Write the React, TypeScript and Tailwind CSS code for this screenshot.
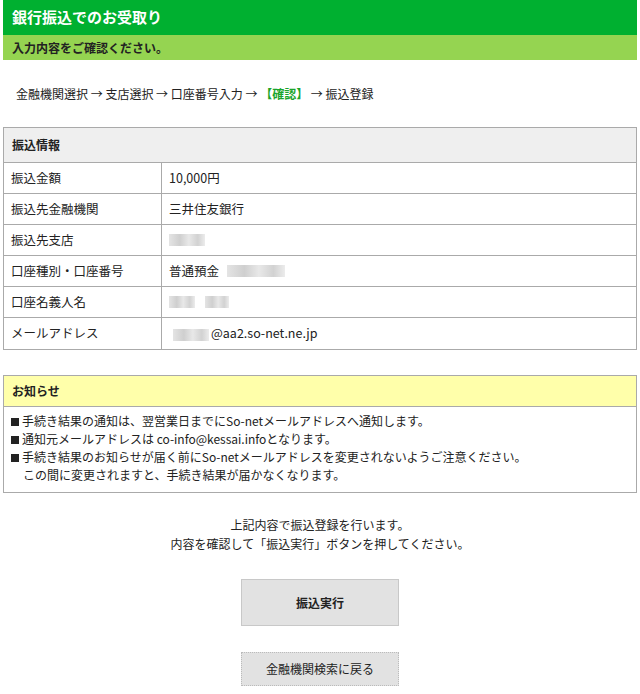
const rows: { label: string; value: React.ReactNode }[] = [
  { label: "振込金額", value: "10,000円" },
  { label: "振込先金融機関", value: "三井住友銀行" },
  { label: "振込先支店", value: <Masked w={36} /> },
  {
    label: "口座種別・口座番号",
    value: (
      <span className="flex items-center gap-[8px]">
        普通預金 <Masked w={58} />
      </span>
    ),
  },
  {
    label: "口座名義人名",
    value: (
      <span className="flex items-center gap-[10px]">
        <Masked w={26} /> <Masked w={24} />
      </span>
    ),
  },
  {
    label: "メールアドレス",
    value: (
      <span className="flex items-center">
        <span className="ml-[4px] mr-[2px]"><Masked w={36} /></span>@aa2.so-net.ne.jp
      </span>
    ),
  },
];

const notices = [
  "手続き結果の通知は、翌営業日までにSo-netメールアドレスへ通知します。",
  "通知元メールアドレスは co-info@kessai.infoとなります。",
  "手続き結果のお知らせが届く前にSo-netメールアドレスを変更されないようご注意ください。",
];

function Masked({ w }: { w: number }) {
  return (
    <span
      className="inline-block h-[12px] align-middle bg-[linear-gradient(90deg,#e4e4e4_0%,#cfcfcf_30%,#e8e8e8_55%,#d2d2d2_80%,#ececec_100%)] blur-[0.6px]"
      style={{ width: w }}
    />
  );
}

function Bullet() {
  return <span className="inline-block w-[8px] h-[8px] bg-[#222] mr-[3px] ml-[1px] align-[0px]" />;
}

export default function App() {
  return (
    <main
      className="bg-white min-h-screen text-[12px] text-[#222]"
      style={{ fontFamily: '"Noto Sans CJK JP", "Noto Sans", sans-serif' }}
    >
      <div className="px-[3px]">
        <div className="bg-[#00b030] h-[35px] flex items-center px-[9px] text-white text-[15px] font-bold">
          銀行振込でのお受取り
        </div>
        <div className="bg-[#95d451] h-[25px] flex items-center px-[9px] text-[12px] font-bold">
          入力内容をご確認ください。
        </div>
      </div>

      <div className="px-[16px] pt-[25px] pb-[24px] text-[12px]">
        金融機関選択 → 支店選択 → 口座番号入力 →{" "}
        <span className="text-[#1aa52a] font-bold">【確認】</span> → 振込登録
      </div>

      <div className="mx-[3px] border border-[#aaa]">
        <div className="bg-[#efefef] h-[35px] flex items-center px-[8px] text-[12px] font-bold border-b border-[#aaa]">
          振込情報
        </div>
        {rows.map((r, i) => (
          <div
            key={r.label}
            className={`flex h-[31px] text-[12.5px] ${i < rows.length - 1 ? "border-b border-[#aaa]" : ""}`}
          >
            <div className="w-[158px] shrink-0 border-r border-[#aaa] flex items-center px-[7px]">{r.label}</div>
            <div className="flex items-center px-[7px]">{r.value}</div>
          </div>
        ))}
      </div>

      <div className="mx-[3px] mt-[25px] border border-[#aaa]">
        <div className="bg-[#ffffaa] h-[31px] flex items-center px-[8px] text-[12px] font-bold border-b border-[#aaa]">
          お知らせ
        </div>
        <div className="px-[6px] pt-[5px] pb-[8px] text-[12px] leading-[18px]">
          {notices.map((n) => (
            <p key={n}>
              <Bullet />
              {n}
            </p>
          ))}
          <p className="pl-[13px]">この間に変更されますと、手続き結果が届かなくなります。</p>
        </div>
      </div>

      <div className="text-center mt-[22px] text-[12px] leading-[19px]">
        <p>上記内容で振込登録を行います。</p>
        <p>内容を確認して「振込実行」ボタンを押してください。</p>
      </div>

      <div className="flex flex-col items-center mt-[26px] gap-[26px]">
        <button className="w-[158px] h-[47px] bg-[#e2e2e2] border border-[#c8c8c8] text-[12px] font-bold text-[#222]">
          振込実行
        </button>
        <button className="w-[158px] h-[34px] bg-[#e2e2e2] border border-dotted border-[#bbb] text-[12px] text-[#222]">
          金融機関検索に戻る
        </button>
      </div>
    </main>
  );
}
